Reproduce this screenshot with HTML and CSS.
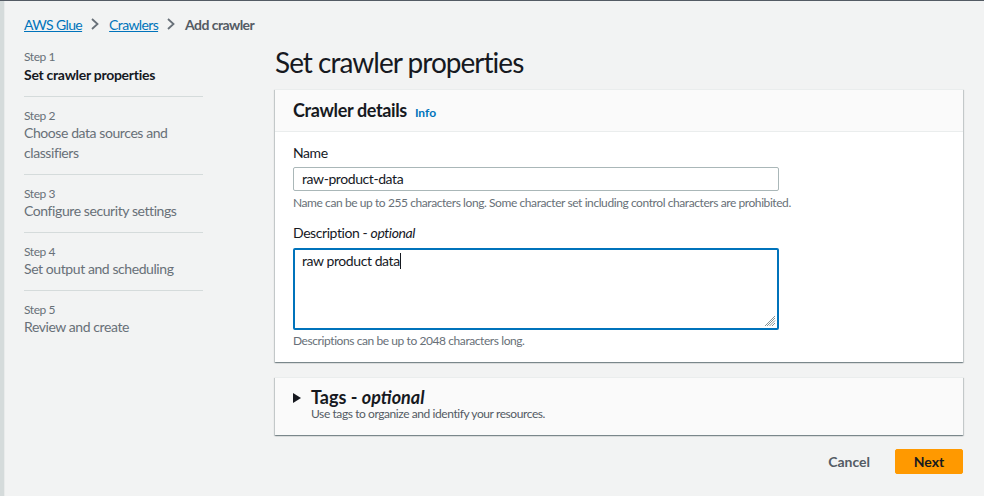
FILE: index.html
```html
<!DOCTYPE html>
<html>
<head>
<meta charset="utf-8">
<link rel="stylesheet" href="styles.css">
</head>
<body>
<div class="strip"></div>
<div class="page">
  <nav class="crumbs">
    <a class="crumb-link" href="#">AWS Glue</a>
    <svg class="chev" width="8" height="12" viewBox="0 0 8 12"><path d="M1 1 6.5 6 1 11" fill="none" stroke="#687078" stroke-width="1.8"/></svg>
    <a class="crumb-link" href="#">Crawlers</a>
    <svg class="chev" width="8" height="12" viewBox="0 0 8 12"><path d="M1 1 6.5 6 1 11" fill="none" stroke="#687078" stroke-width="1.8"/></svg>
    <span class="crumb-current">Add crawler</span>
  </nav>
  <div class="layout">
    <ul class="steps">
      <li class="step">
        <div class="step-num">Step 1</div>
        <div class="step-title active">Set crawler properties</div>
      </li>
      <li class="step">
        <div class="step-num">Step 2</div>
        <div class="step-title">Choose data sources and classifiers</div>
      </li>
      <li class="step">
        <div class="step-num">Step 3</div>
        <div class="step-title">Configure security settings</div>
      </li>
      <li class="step">
        <div class="step-num">Step 4</div>
        <div class="step-title">Set output and scheduling</div>
      </li>
      <li class="step">
        <div class="step-num">Step 5</div>
        <div class="step-title">Review and create</div>
      </li>
    </ul>
    <main class="main">
      <h1 class="title">Set crawler properties</h1>
      <section class="card">
        <div class="card-header">
          <h2 class="card-title">Crawler details</h2>
          <a class="info" href="#">Info</a>
        </div>
        <div class="card-body">
          <label class="label">Name</label>
          <div class="input">raw-product-data</div>
          <div class="hint">Name can be up to 255 characters long. Some character set including control characters are prohibited.</div>
          <label class="label label-desc">Description - <i>optional</i></label>
          <div class="textarea"><span>raw product data</span><span class="caret"></span>
            <svg class="grip" width="12" height="12" viewBox="0 0 12 12"><path d="M11 3 3 11M11 5.5 5.5 11M11 8 8 11M11 1 1 11" stroke="#879596" stroke-width="1"/></svg>
          </div>
          <div class="hint hint-desc">Descriptions can be up to 2048 characters long.</div>
        </div>
      </section>
      <section class="card tags">
        <div class="tags-head">
          <svg class="caret-right" width="8" height="10" viewBox="0 0 8 10"><path d="M0 0 8 5 0 10z" fill="#16191f"/></svg>
          <div>
            <div class="tags-title">Tags - <i>optional</i></div>
            <div class="tags-sub">Use tags to organize and identify your resources.</div>
          </div>
        </div>
      </section>
      <div class="actions">
        <button class="btn-link">Cancel</button>
        <button class="btn-primary">Next</button>
      </div>
    </main>
  </div>
</div>
</body>
</html>
```

FILE: styles.css
```css
* { box-sizing: border-box; }
html, body { margin: 0; padding: 0; }
body {
  display: flex;
  height: 496px;
  overflow: hidden;
  background: #f2f3f3;
  border-top: 1px solid #545b64;
  font-family: "Lato", "Open Sans", sans-serif;
  color: #16191f;
  font-size: 14px;
  letter-spacing: -0.03em;
}
.strip {
  width: 5px;
  flex: none;
  background: #d5dbdb;
  border-right: 1px solid #e9ebeb;
}
.page {
  flex: 1;
  padding: 0 21px 0 19px;
}
.crumbs {
  display: flex;
  align-items: center;
  height: 43px;
  padding-top: 3px;
}
.crumb-link {
  color: #0073bb;
  text-decoration: underline;
  font-size: 14px;
  letter-spacing: -0.045em;
}
.chev { margin: 0 10px 0 9px; }
.crumb-current {
  color: #545b64;
  font-weight: 700;
  letter-spacing: -0.04em;
}
.layout {
  display: flex;
}
.steps {
  list-style: none;
  margin: 0;
  padding: 5px 0 0 0;
  width: 179px;
  flex: none;
}
.step {
  padding: 11px 0 11px;
  border-top: 1px solid #d5dbdb;
}
.step:first-child { border-top: none; padding-top: 0; padding-bottom: 11px; }
.step-num {
  font-size: 12px;
  line-height: 15px;
  color: #687078;
}
.step:first-child .step-num { line-height: 16px; }
.step-title {
  font-size: 14px;
  line-height: 20px;
  color: #687078;
}
.step-title.active {
  color: #16191f;
  font-weight: 700;
  letter-spacing: -0.02em;
}
.main {
  flex: 1;
  margin-left: 72px;
}
.title {
  margin: 0;
  font-size: 28px;
  line-height: 36px;
  font-weight: 400;
  height: 45px;
  letter-spacing: -0.035em;
}
.card {
  background: #fff;
  box-shadow: 0 1px 1px 0 rgba(0,28,36,.3), 1px 1px 1px 0 rgba(0,28,36,.15), -1px 1px 1px 0 rgba(0,28,36,.15);
  border-top: 1px solid #eaeded;
}
.card-header {
  display: flex;
  align-items: baseline;
  gap: 8px;
  background: #fafafa;
  border-bottom: 1px solid #eaeded;
  padding: 9px 18px 9px;
}
.card-title {
  margin: 0;
  font-size: 18px;
  line-height: 23px;
  font-weight: 700;
  letter-spacing: -0.02em;
}
.info {
  font-size: 12px;
  font-weight: 700;
  color: #0073bb;
  text-decoration: none;
  letter-spacing: 0;
}
.card-body {
  padding: 11px 18px 13px;
}
.label {
  display: block;
  line-height: 20px;
  font-size: 14px;
  color: #16191f;
  margin-bottom: 4px;
}
.label-desc { margin-top: 12px; margin-bottom: 5px; }
.input {
  width: 486px;
  height: 24px;
  border: 1px solid #aab7b8;
  border-radius: 2px;
  padding: 0 8px;
  line-height: 22px;
  font-size: 14px;
  background: #fff;
}
.textarea {
  position: relative;
  width: 486px;
  height: 82px;
  border: 2px solid #0073bb;
  border-radius: 2px;
  padding: 0 7px;
  line-height: 22px;
}
.caret {
  display: inline-block;
  width: 1px;
  height: 16px;
  background: #16191f;
  vertical-align: -3px;
}
.grip {
  position: absolute;
  right: 1px;
  bottom: 1px;
}
.hint {
  font-size: 12px;
  line-height: 16px;
  color: #687078;
  margin-top: 4px;
}
.hint-desc { margin-top: 3px; }
.tags {
  margin-top: 15px;
  background: #fafafa;
}
.tags-head {
  display: flex;
  align-items: flex-start;
  gap: 10px;
  padding: 9px 18px 14px 18px;
}
.caret-right { margin-top: 6px; flex: none; }
.tags-title {
  font-size: 18px;
  line-height: 20px;
  font-weight: 700;
  letter-spacing: 0;
}
.tags-sub {
  font-size: 12px;
  line-height: 14px;
  color: #545b64;
}
.actions {
  display: flex;
  justify-content: flex-end;
  align-items: center;
  gap: 13px;
  margin-top: 14px;
}
.btn-link {
  background: none;
  border: none;
  font-family: inherit;
  font-size: 14px;
  font-weight: 700;
  color: #545b64;
  padding: 4px 12px;
}
.btn-primary {
  background: #ff9900;
  border: 1px solid #ff9900;
  border-radius: 2px;
  font-family: inherit;
  font-size: 14px;
  font-weight: 700;
  color: #16191f;
  width: 68px;
  height: 25px;
  padding: 0;
}
```
